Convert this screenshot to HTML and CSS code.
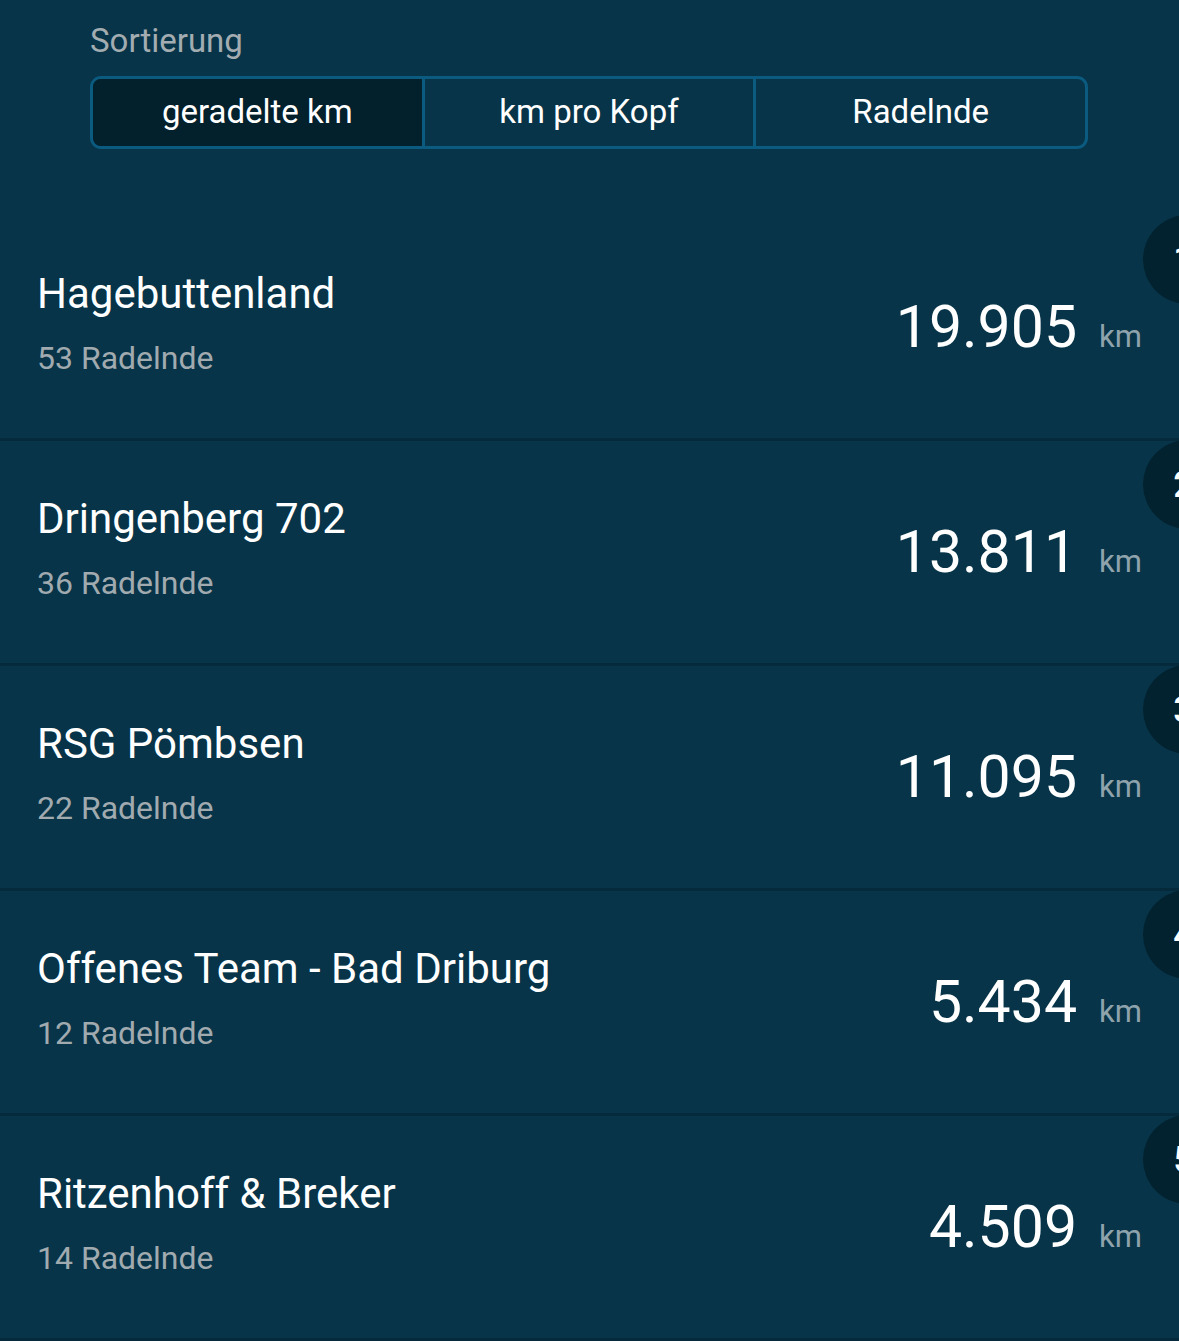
FILE: index.html
```html
<!DOCTYPE html>
<html>
<head>
  <title>Team-Ranking</title>
  <link rel="stylesheet" href="styles.css">
</head>
<body>
  <div class="sort">
    <div class="sort-label">Sortierung</div>
    <div class="segments">
      <button class="seg active">geradelte km</button>
      <button class="seg">km pro Kopf</button>
      <button class="seg">Radelnde</button>
    </div>
  </div>

  <ul class="ranking">
    <li class="team">
      <div class="team-info">
        <div class="team-name">Hagebuttenland</div>
        <div class="team-members">53 Radelnde</div>
      </div>
      <div class="team-km">19.905<span class="unit">km</span></div>
      <span class="rank">1</span>
    </li>
    <li class="team">
      <div class="team-info">
        <div class="team-name">Dringenberg 702</div>
        <div class="team-members">36 Radelnde</div>
      </div>
      <div class="team-km">13.811<span class="unit">km</span></div>
      <span class="rank">2</span>
    </li>
    <li class="team">
      <div class="team-info">
        <div class="team-name">RSG Pömbsen</div>
        <div class="team-members">22 Radelnde</div>
      </div>
      <div class="team-km">11.095<span class="unit">km</span></div>
      <span class="rank">3</span>
    </li>
    <li class="team">
      <div class="team-info">
        <div class="team-name">Offenes Team - Bad Driburg</div>
        <div class="team-members">12 Radelnde</div>
      </div>
      <div class="team-km">5.434<span class="unit">km</span></div>
      <span class="rank">4</span>
    </li>
    <li class="team">
      <div class="team-info">
        <div class="team-name">Ritzenhoff &amp; Breker</div>
        <div class="team-members">14 Radelnde</div>
      </div>
      <div class="team-km">4.509<span class="unit">km</span></div>
      <span class="rank">5</span>
    </li>
  </ul>
</body>
</html>
```

FILE: styles.css
```css
html, body { margin: 0; padding: 0; }
body { background: #073448; color: #fff; font-family: Roboto, "Noto Sans", sans-serif; overflow: hidden; width: 1179px; height: 1341px; }

.sort { padding: 23px 91px 0 90px; }
.sort-label { font-size: 33px; line-height: 36px; color: #a2acb1; }
.segments { display: flex; margin-top: 17px; height: 73px; box-sizing: border-box; border: 3px solid #0b5a80; border-radius: 11px; overflow: hidden; }
.seg { flex: 1; background: transparent; color: #fff; border: none; font-family: inherit; font-size: 33px; padding: 0 0 3px; }
.seg + .seg { border-left: 3px solid #0b5a80; }
.seg.active { background: #03202d; }

.ranking { list-style: none; margin: 67px 0 0; padding: 0; }
.team { position: relative; display: flex; align-items: center; justify-content: space-between; height: 222px; padding: 0 37px; border-bottom: 3px solid #042a3b; }
.team-info { margin-bottom: 6px; }
.team-name { font-size: 42px; line-height: 48px; }
.team-members { font-size: 32px; line-height: 40px; margin-top: 20px; color: #a0aaaf; }
.team-km { font-size: 59px; line-height: 64px; margin-top: 10px; }
.unit { font-size: 31px; color: #8fa3ac; margin-left: 22px; }
.rank { position: absolute; top: -1px; right: -53px; width: 89px; height: 89px; padding-right: 8px; box-sizing: border-box; border-radius: 50%; background: #03222f; display: flex; align-items: center; justify-content: center; font-size: 36px; font-weight: 500; }
```
